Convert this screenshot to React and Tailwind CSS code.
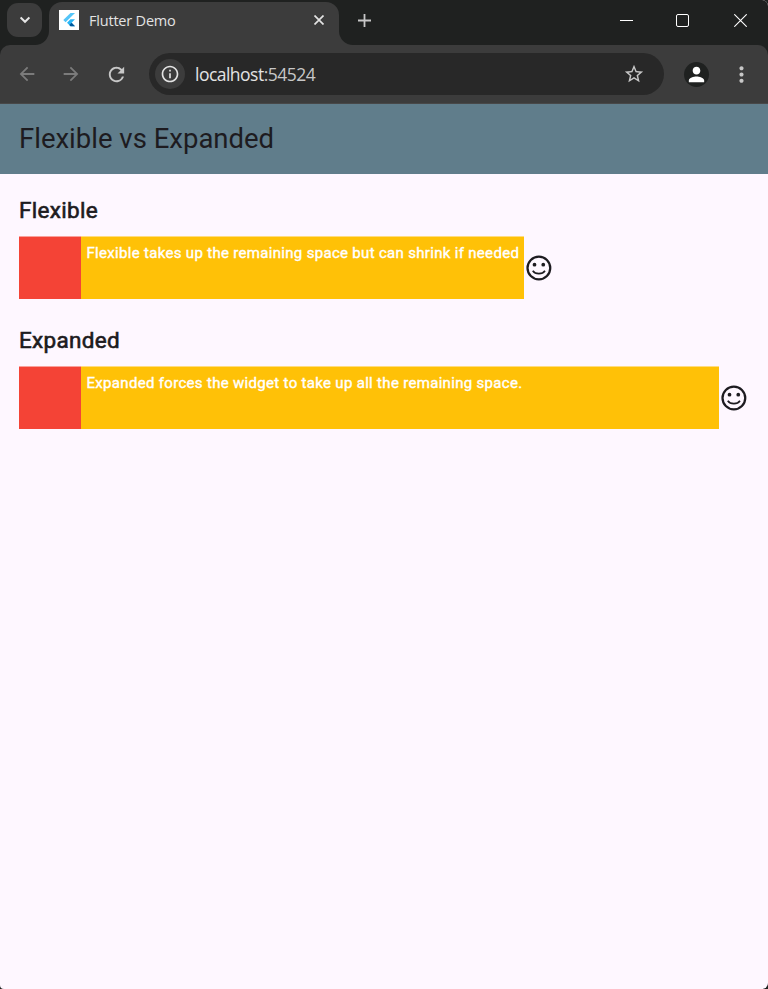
import React from "react";
import {
  MdArrowBack,
  MdArrowForward,
  MdRefresh,
  MdStarBorder,
  MdMoreVert,
  MdPerson,
  MdInfoOutline,
} from "react-icons/md";

function FlutterLogo() {
  return (
    <svg viewBox="0 0 20 20" className="h-5 w-5 bg-white">
      <path d="M11.5 3H16L6.6 12.3 4.3 10z" fill="#54c5f8" />
      <path d="M11.5 9.3H16L12.6 12.7 16 16.2H11.5L8 12.7z" fill="#29b6f6" />
      <path d="M10.3 15l2.3-2.3L16 16.2H11.5z" fill="#01579b" />
    </svg>
  );
}

function Smiley() {
  return (
    <svg viewBox="0 0 24 24" className="h-[30px] w-[30px] shrink-0 text-[#1d1b20]" fill="none" stroke="currentColor">
      <circle cx="11.9" cy="12" r="9.1" strokeWidth="1.8" />
      <circle cx="8.4" cy="9.3" r="1.5" fill="currentColor" stroke="none" />
      <circle cx="15.4" cy="9.3" r="1.5" fill="currentColor" stroke="none" />
      <path d="M7 14.2c2.1 3.1 7.7 3.1 9.8 0" strokeWidth="1.3" />
    </svg>
  );
}

function TitleBar() {
  return (
    <div className="flex h-[45px] items-start bg-[#1f2120]">
      <button className="relative z-10 mt-[3px] ml-[7px] flex h-[34px] w-[35px] items-center justify-center rounded-[11px] bg-[#3c3c3c]">
        <svg viewBox="0 0 10 8" className="h-2 w-[10px]" fill="none" stroke="#e6e6e6" strokeWidth="2">
          <path d="M.6 1.4 5 5.8 9.4 1.4" />
        </svg>
      </button>
      <div className="relative mt-[2px] ml-[7px] flex h-[43px] w-[290px] rounded-t-[13px] bg-[#3c3c3c] pl-[10px]">
        <span className="absolute bottom-0 -left-[14px] h-[14px] w-[14px] overflow-hidden bg-[#3c3c3c]">
          <span className="block h-full w-full rounded-br-[14px] bg-[#1f2120]" />
        </span>
        <span className="absolute -right-[14px] bottom-0 h-[14px] w-[14px] overflow-hidden bg-[#3c3c3c]">
          <span className="block h-full w-full rounded-bl-[14px] bg-[#1f2120]" />
        </span>
        <div className="mt-2">
          <FlutterLogo />
        </div>
        <span className="mt-[9px] ml-[10px] font-['Open_Sans',sans-serif] text-[14.5px] leading-5 tracking-[-0.2px] whitespace-nowrap text-[#e3e3e3]">
          Flutter Demo
        </span>
        <svg viewBox="0 0 10 10" className="mt-[13px] mr-[15px] ml-auto h-[10px] w-[10px]" stroke="#e3e3e3" strokeWidth="1.7">
          <path d="M.5.5l9 9M9.5.5l-9 9" />
        </svg>
      </div>
      <svg viewBox="0 0 13 13" className="mt-[13.5px] ml-[19px] h-[13px] w-[13px]" stroke="#c7c7c7" strokeWidth="1.8">
        <path d="M6.5 0v13M0 6.5h13" />
      </svg>
      <div className="mt-[14px] mr-[21px] ml-auto flex">
        <svg viewBox="0 0 13 13" className="h-[13px] w-[13px]" stroke="#fff" strokeWidth="1">
          <path d="M0 6.5h13" />
        </svg>
        <svg viewBox="0 0 13 13" className="ml-[43px] h-[13px] w-[13px]" fill="none" stroke="#fff" strokeWidth="1">
          <rect x=".5" y=".5" width="12" height="12" rx="1.5" />
        </svg>
        <svg viewBox="0 0 13 13" className="ml-[45px] h-[13px] w-[13px]" stroke="#fff" strokeWidth="1.1">
          <path d="M.3.3l12.4 12.4M12.7.3L.3 12.7" />
        </svg>
      </div>
    </div>
  );
}

function Toolbar() {
  return (
    <div className="bg-[#1f2120]">
      <div className="flex h-[59px] items-center rounded-t-[10px] border-b border-[#484848] bg-[#3c3c3c] pl-[15.5px]">
        <MdArrowBack className="h-[22px] w-[22px] text-[#7b7b7b]" />
        <MdArrowForward className="ml-[22.5px] h-[22px] w-[22px] text-[#7b7b7b]" />
        <MdRefresh className="ml-[23px] h-[23px] w-[23px] text-[#c7c7c7]" />
        <div className="ml-[21px] flex h-[42px] w-[515px] items-center rounded-full bg-[#282828] pl-[6px]">
          <div className="flex h-[30px] w-[30px] items-center justify-center rounded-full bg-[#3c3c3c]">
            <MdInfoOutline className="h-5 w-5 text-[#e3e3e3]" />
          </div>
          <span className="ml-[10px] pt-px font-['Open_Sans',sans-serif] text-[17.5px] tracking-[-0.52px] text-[#e3e3e3]">
            localhost<span className="text-[#c7c7c7]">:54524</span>
          </span>
          <MdStarBorder className="mr-[19px] ml-auto h-[22px] w-[22px] text-[#c7c7c7]" />
        </div>
        <div className="ml-5 flex h-[25px] w-[25px] items-center justify-center rounded-full bg-[#1f2120]">
          <MdPerson className="h-[23px] w-[23px] text-white" />
        </div>
        <MdMoreVert className="ml-5 h-[25px] w-[25px] text-[#c7c7c7]" />
      </div>
    </div>
  );
}

function DemoRow({ title, text, fill }) {
  return (
    <section className="h-[130px]">
      <h2 className="h-[42px] pt-[3px] text-[22.5px] leading-[27px] tracking-[0.3125px] text-[#1d1b20] [-webkit-text-stroke:0.6px_#1d1b20]">
        {title}
      </h2>
      <div className="flex h-[63px] items-center">
        <div className="h-full w-[62px] shrink-0 border-t border-[#f9a19b] bg-[#f44336]" />
        <div
          className={
            fill
              ? "h-full flex-1 border-t border-[#ffdc80] bg-[#ffc107] px-[5.5px] pt-[6px]"
              : "h-full w-[443px] border-t border-[#ffdc80] bg-[#ffc107] px-[5.5px] pt-[6px]"
          }
        >
          <p className="text-[15px] leading-5 tracking-[0.3125px] whitespace-nowrap text-white [-webkit-text-stroke:0.4px_#fff]">
            {text}
          </p>
        </div>
        <Smiley />
      </div>
    </section>
  );
}

export default function App() {
  return (
    <div className="bg-[#1f2120]">
      <div className="flex h-[989px] w-[768px] flex-col overflow-hidden rounded-tr-[6px] rounded-br-[6px] rounded-bl-[4px] bg-[#fef7ff] font-['Roboto',sans-serif]">
        <TitleBar />
        <Toolbar />
        <header className="flex h-[70px] items-center bg-[#607d8b] pb-[2px] pl-[19px]">
          <h1 className="text-[27.5px] leading-[35px] text-[#1d1b20]">Flexible vs Expanded</h1>
        </header>
        <main className="pt-5 pr-[19px] pl-[19px]">
          <DemoRow title="Flexible" text="Flexible takes up the remaining space but can shrink if needed" />
          <DemoRow title="Expanded" text="Expanded forces the widget to take up all the remaining space." fill />
        </main>
      </div>
    </div>
  );
}
